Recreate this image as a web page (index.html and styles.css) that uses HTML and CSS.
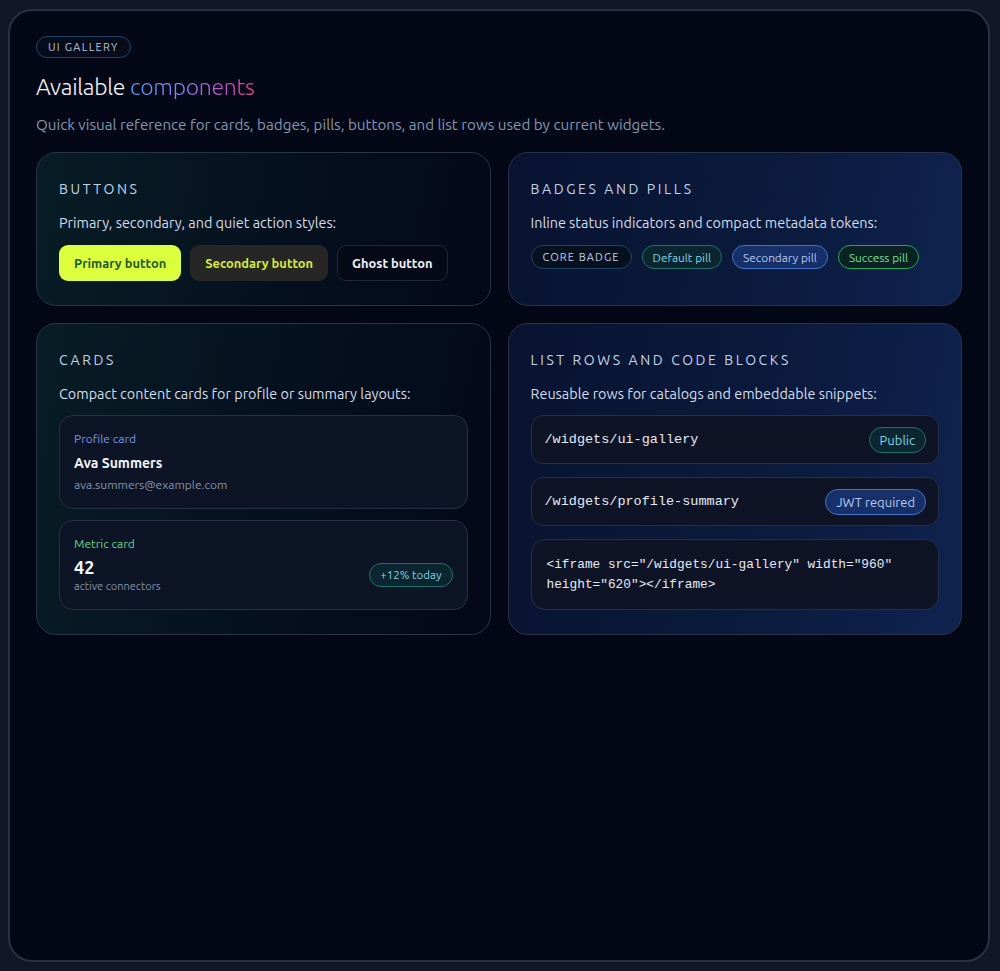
FILE: index.html
```html
<!DOCTYPE html>
<html lang="en">
<head>
<meta charset="utf-8">
<title>UI Gallery</title>
<link rel="stylesheet" href="styles.css">
</head>
<body>
<main class="shell">
  <span class="eyebrow">UI GALLERY</span>
  <h1 class="title">Available <span class="grad">components</span></h1>
  <p class="lead">Quick visual reference for cards, badges, pills, buttons, and list rows used by current widgets.</p>

  <div class="grid">
    <section class="panel panel-teal">
      <h2 class="panel-title">BUTTONS</h2>
      <p class="panel-desc">Primary, secondary, and quiet action styles:</p>
      <div class="btn-row">
        <button class="btn btn-primary">Primary button</button>
        <button class="btn btn-secondary">Secondary button</button>
        <button class="btn btn-ghost">Ghost button</button>
      </div>
    </section>

    <section class="panel panel-blue">
      <h2 class="panel-title">BADGES AND PILLS</h2>
      <p class="panel-desc">Inline status indicators and compact metadata tokens:</p>
      <div class="pill-row">
        <span class="badge">CORE BADGE</span>
        <span class="pill pill-default">Default pill</span>
        <span class="pill pill-secondary">Secondary pill</span>
        <span class="pill pill-success">Success pill</span>
      </div>
    </section>

    <section class="panel panel-teal">
      <h2 class="panel-title">CARDS</h2>
      <p class="panel-desc">Compact content cards for profile or summary layouts:</p>
      <div class="stack">
        <div class="mini-card">
          <div class="mini-label label-blue">Profile card</div>
          <div class="mini-name">Ava Summers</div>
          <div class="mini-sub mini-email">ava.summers@example.com</div>
        </div>
        <div class="mini-card mini-metric">
          <div class="mini-label label-green">Metric card</div>
          <div class="metric-row">
            <div>
              <div class="metric-value">42</div>
              <div class="metric-sub">active connectors</div>
            </div>
            <span class="pill pill-default pill-sm">+12% today</span>
          </div>
        </div>
      </div>
    </section>

    <section class="panel panel-blue">
      <h2 class="panel-title">LIST ROWS AND CODE BLOCKS</h2>
      <p class="panel-desc">Reusable rows for catalogs and embeddable snippets:</p>
      <div class="stack stack-wide">
        <div class="list-row">
          <code class="route">/widgets/ui-gallery</code>
          <span class="pill pill-default pill-lg">Public</span>
        </div>
        <div class="list-row">
          <code class="route">/widgets/profile-summary</code>
          <span class="pill pill-secondary pill-lg">JWT required</span>
        </div>
        <pre class="code">&lt;iframe src="/widgets/ui-gallery" width="960"
height="620"&gt;&lt;/iframe&gt;</pre>
      </div>
    </section>
  </div>
</main>
</body>
</html>
```

FILE: styles.css
```css
* { box-sizing: border-box; }

html, body { height: 100%; }

body {
  margin: 0;
  padding: 9px 10px 9px 8px;
  background: #111726;
  font-family: "Ubuntu", "Noto Sans", "Open Sans", sans-serif;
  color: #e6edf7;
}

.shell {
  height: 100%;
  border: 2px solid #2a3144;
  border-radius: 24px;
  background: #040816;
  padding: 25px 26px 26px 26px;
}

.eyebrow {
  display: inline-flex;
  align-items: center;
  height: 22px;
  padding: 0 11px;
  border: 1px solid #1e4664;
  border-radius: 999px;
  font-size: 11px;
  letter-spacing: 1.3px;
  color: #b9c8da;
  background: #060c1c;
}

.title {
  margin: 13px 0 0;
  font-size: 23px;
  line-height: 32px;
  font-weight: 300;
  color: #f4f7fb;
  letter-spacing: -0.3px;
}

.grad {
  background: linear-gradient(90deg, #48a6ec 0%, #8f78f0 45%, #c24fc8 75%, #e8488f 100%);
  -webkit-background-clip: text;
  background-clip: text;
  color: transparent;
}

.lead {
  margin: 11px 0 0;
  font-size: 15.2px;
  line-height: 22px;
  color: #8496b0;
}

.grid {
  margin-top: 16px;
  display: grid;
  grid-template-columns: 1fr 1fr;
  gap: 17px;
}

.panel {
  border: 1px solid #2a3348;
  border-radius: 20px;
  padding: 26px 22px 24px 22px;
}

.panel-teal {
  background: linear-gradient(100deg, #081d26 0%, #05101e 55%, #040818 100%);
}

.panel-blue {
  background: linear-gradient(100deg, #091331 0%, #0b1a3c 55%, #0f2350 100%);
}

.panel-title {
  margin: 0;
  font-size: 14px;
  line-height: 20px;
  font-weight: 400;
  letter-spacing: 2.6px;
  color: #c5d3ea;
}

.panel-desc {
  margin: 14px 0 0;
  font-size: 14.4px;
  line-height: 20px;
  color: #d4ddea;
}

.btn-row {
  margin-top: 12px;
  display: flex;
  gap: 9px;
}

.btn {
  height: 36px;
  padding: 0 14px;
  border-radius: 9px;
  font-family: inherit;
  font-size: 12.9px;
  font-weight: 700;
  border: 1px solid transparent;
}

.btn-primary { background: #dcff3b; color: #1f5a2c; }
.btn-secondary { background: #262626; color: #d6ec2e; }
.btn-ghost { background: #050a16; color: #eef2f8; border-color: #1f2739; }

.pill-row {
  margin-top: 12px;
  display: flex;
  gap: 10px;
  align-items: center;
}

.badge {
  display: inline-flex;
  align-items: center;
  height: 24px;
  padding: 0 11px;
  border: 1px solid #1d4562;
  border-radius: 999px;
  background: #07101f;
  font-size: 11px;
  letter-spacing: 1.1px;
  color: #c3d2e3;
}

.pill {
  display: inline-flex;
  align-items: center;
  height: 24px;
  padding: 0 10px;
  border-radius: 999px;
  border: 1px solid;
  font-size: 11.8px;
  white-space: nowrap;
}

.pill-default { background: #0b2630; border-color: #1c7468; color: #82d6e4; }
.pill-secondary { background: #17306a; border-color: #3f74c8; color: #b6cbef; }
.pill-success { background: #0a2222; border-color: #24a85c; color: #70e39b; }

.pill-sm { font-size: 11.5px; padding: 0 10px; }
.pill-lg { height: 26px; font-size: 13px; padding: 0 10px; }

.stack {
  margin-top: 11px;
  display: flex;
  flex-direction: column;
  gap: 11px;
}

.stack-wide { gap: 13px; }

.mini-card {
  border: 1px solid #262f43;
  border-radius: 14px;
  background: #0d1426;
  padding: 15px 14px;
}

.mini-metric { padding-bottom: 16px; }

.mini-label {
  font-size: 12px;
  line-height: 16px;
}

.label-blue { color: #7e97ea; }
.label-green { color: #67d793; }

.mini-name {
  margin-top: 6px;
  font-size: 14px;
  line-height: 20px;
  font-weight: 700;
  color: #f2f5fa;
}

.mini-sub {
  margin-top: 3px;
  font-size: 12px;
  line-height: 16px;
  color: #8794aa;
}

.mini-email { margin-top: 4px; }

.metric-row {
  margin-top: 4px;
  display: flex;
  align-items: center;
  justify-content: space-between;
}

.metric-value {
  font-size: 18px;
  line-height: 22px;
  font-weight: 700;
  color: #f4f7fb;
}

.metric-sub {
  margin-top: 1px;
  font-size: 11px;
  line-height: 14px;
  color: #8794aa;
}

.list-row {
  display: flex;
  align-items: center;
  justify-content: space-between;
  min-height: 49px;
  padding: 0 12px 0 13px;
  border: 1px solid #262f43;
  border-radius: 12px;
  background: #0e1426;
}

.route {
  font-family: "Liberation Mono", "DejaVu Sans Mono", monospace;
  font-size: 13.5px;
  color: #e6ebf3;
}

.code {
  margin: 0;
  padding: 15px 15px 14px;
  border: 1px solid #262f43;
  border-radius: 14px;
  background: #0e1426;
  font-family: "Liberation Mono", "DejaVu Sans Mono", monospace;
  font-size: 12.8px;
  line-height: 20px;
  color: #e6ebf3;
  white-space: pre-wrap;
}
```
